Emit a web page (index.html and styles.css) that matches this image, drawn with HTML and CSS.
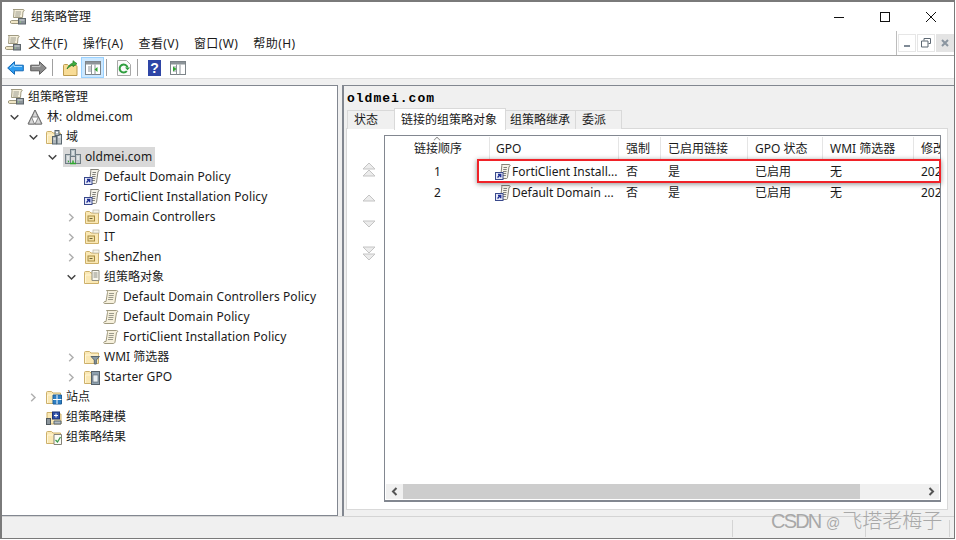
FILE: index.html
```html
<!DOCTYPE html>
<html lang="zh-CN">
<head>
<meta charset="utf-8">
<title>组策略管理</title>
<link rel="stylesheet" href="styles.css">
</head>
<body>
<svg class="defs" width="0" height="0" aria-hidden="true">
  <defs>
    <symbol id="scroll" viewBox="0 0 16 16">
      <path d="M3.500 1.500h10c1 0 1.500 .7 1 1.500l-1 .5-1.500 9.500c-.2 1-1 1.500-2 1.500H1.500c-1 0-1-1.500 0-2H3l1.500-9c.1-.8-.2-1.500-1-2z" fill="#f6f0dc" stroke="#a09a80"/>
      <path d="M6 4.500h5M5.700 6.500h5M5.400 8.500h5M5 10.500h5" stroke="#9a9a8c" fill="none"/>
    </symbol>
    <symbol id="console" viewBox="0 0 16 16">
      <path d="M3 .5h10c1 0 1.500 .7 1 1.500l-1 .5-.5 6H3.500L4 2c0-.8-.2-1.500-1-1.500z" fill="#f6f0dc" stroke="#a09a80"/>
      <path d="M5.500 3h5.500M5.300 5h5.500M5.100 7h5" stroke="#9a9a8c" fill="none"/>
      <path d="M1.500 11.500h8v3h-8c-1.500 0-1.500-3 0-3z" fill="#f0e6c6" stroke="#a09a80"/>
      <rect x="8.500" y="9.500" width="7" height="5.500" fill="#8c9499" stroke="#5d656a"/>
      <path d="M9.500 11h5" stroke="#d5dbde"/>
      <path d="M10 12.500h1v1h-1z" fill="#8fd47f"/>
    </symbol>
    <symbol id="gpo" viewBox="0 0 16 16">
      <path d="M6.500 .5h7.500c1 0 1.500 .7 1 1.500l-1 .5-1.500 11c-.1 .6-.5 1-1 1H5.500L6.800 2c0-.8 .2-1.500-.3-1.500z" fill="#f5f3ea" stroke="#85837a"/>
      <path d="M8.500 3.500h3.500M8.200 5.500h3.500M8 7.500h3.500M7.700 9.500h3.500M7.400 11.500h3.500" stroke="#7f7f7a" fill="none"/>
      <rect x=".5" y="8.500" width="7.500" height="7" fill="#e6e9f7" stroke="#3a4a8c"/>
      <path d="M2.500 13.500l3-3M3 10.500h2.700v2.700" stroke="#1f2f95" fill="none" stroke-width="1.400"/>
    </symbol>
    <symbol id="ou" viewBox="0 0 16 16">
      <path d="M1.500 14.500v-11c0-.6 .4-1 1-1h3l1.500 1.500h7.500v10.500z" fill="#fae8b4" stroke="#cdb06a"/>
      <rect x="9" y="1" width="6" height="3" fill="#f6f3e6" stroke="#b8b5a6" stroke-width=".7"/>
      <rect x="4" y="7" width="6.500" height="5" fill="#f3e0a6" stroke="#a68a3f"/>
      <path d="M5.500 9.500h3" stroke="#6e6230"/>
    </symbol>
    <symbol id="folder" viewBox="0 0 16 16">
      <path d="M.5 14.500V3.500c0-.6 .4-1 1-1h4L7 4h7.500v10.500z" fill="#fae8b4" stroke="#cdb06a"/>
      <path d="M1.500 14V6h13" fill="none" stroke="#fff6d8"/>
    </symbol>
    <symbol id="folder-doc" viewBox="0 0 16 16">
      <use href="#folder"/>
      <path d="M8 1.500h7v10H8z" fill="#f9f7ee" stroke="#8f8d7f"/>
      <path d="M9.500 4h4M9.500 6h4M9.500 8h4" stroke="#8b8b80"/>
    </symbol>
    <symbol id="folder-domain" viewBox="0 0 16 16">
      <use href="#folder"/>
      <rect x="6.500" y="7.500" width="4" height="7.500" fill="#aeb6ba" stroke="#59666e"/>
      <rect x="11" y="5.500" width="4.500" height="9.500" fill="#c2c9cc" stroke="#59666e"/>
      <rect x="9" y="1.500" width="4" height="5" fill="#b8c2c6" stroke="#59666e"/>
      <path d="M7.500 10h2M12 8h2.500M10 3.500h2" stroke="#fff"/>
    </symbol>
    <symbol id="domain" viewBox="0 0 16 16">
      <rect x="5.500" y=".5" width="5" height="7" fill="#b8c2c6" stroke="#6f7c84"/>
      <rect x=".5" y="5.500" width="5" height="9" fill="#c2c9cc" stroke="#6f7c84"/>
      <rect x="10.500" y="5.500" width="5" height="9" fill="#c2c9cc" stroke="#6f7c84"/>
      <path d="M7 3h2M7 5h2M2 8h2M2 10h2M12 8h2M12 10h2" stroke="#fff"/>
      <path d="M3 12.500h1M8 11.500v3M5 14.500h6" stroke="#2fa82f" stroke-width="1.500"/>
    </symbol>
    <symbol id="forest" viewBox="0 0 16 16">
      <path d="M8 1L1 15h14z" fill="#fff" stroke="#6d6d6d"/>
      <path d="M8 1l-3 7h6zM4.500 8L1.500 15h6zM11.500 8l-3.500 7h6.500z" fill="#d6d6d6" stroke="#6d6d6d" stroke-width=".8"/>
    </symbol>
    <symbol id="filter-folder" viewBox="0 0 16 16">
      <use href="#folder"/>
      <path d="M7 7.500h8.500l-3.200 3.500v4h-2v-4z" fill="#8a9aa2" stroke="#59666e"/>
    </symbol>
    <symbol id="starter-folder" viewBox="0 0 16 16">
      <use href="#folder"/>
      <rect x="7.500" y="2.500" width="8" height="13" fill="#8ea0ae" stroke="#56616a"/>
      <rect x="9" y="6" width="5" height="7" fill="#e8eef2" stroke="#56616a" stroke-width=".6"/>
    </symbol>
    <symbol id="sites-folder" viewBox="0 0 16 16">
      <use href="#folder"/>
      <path d="M7 6h8.500v9H7z" fill="#2d7fc4" stroke="#1f5f99"/>
      <path d="M11 6v9M7 10.500h8.500" stroke="#fff"/>
    </symbol>
    <symbol id="modeling" viewBox="0 0 16 16">
      <path d="M1 15V3.500h5L7.500 5H15v10z" fill="#fae8b4" stroke="#cdb06a"/>
      <rect x="6.500" y="3" width="7" height="7" fill="#2d4fa8" stroke="#1d3272"/>
      <path d="M10 4.500v4M8 6.500h4" stroke="#fff"/>
      <rect x=".5" y="9.500" width="4" height="6" fill="#8c959b" stroke="#4f585e"/>
      <path d="M8 12h7v3H8z" fill="#b3bcc2" stroke="#59666e"/>
    </symbol>
    <symbol id="results" viewBox="0 0 16 16">
      <use href="#folder"/>
      <path d="M8 5.500h7.500v10H8z" fill="#fbfbf6" stroke="#85837a"/>
      <path d="M9.500 11l2 2 3-5" fill="none" stroke="#3a9a4c" stroke-width="1.300"/>
    </symbol>
    <symbol id="chev-down" viewBox="0 0 9 6"><path d="M.7 .7L4.500 4.500 8.300 .7" fill="none" stroke="#444" stroke-width="1.500"/></symbol>
    <symbol id="chev-right" viewBox="0 0 6 9"><path d="M.7 .7L4.500 4.500 .7 8.300" fill="none" stroke="#b0b0b0" stroke-width="1.500"/></symbol>
    <symbol id="panel-left" viewBox="0 0 16 14">
      <rect x=".5" y=".5" width="15" height="13" fill="#fff" stroke="#7d8489"/>
      <path d="M1 1h14v2.500H1z" fill="#8d9499"/>
      <path d="M3 6h3M3 8h3M3 10h3M6.500 3.500v10M10 3.500v10" stroke="#8d9499"/>
    </symbol>
    <symbol id="move-top" viewBox="0 0 16 16"><path d="M8 1l6 6H2zM8 8l6 6H2z" fill="#ececec" stroke="#c4c4c4"/></symbol>
    <symbol id="move-up" viewBox="0 0 16 8"><path d="M8 1l6 6H2z" fill="#ececec" stroke="#c4c4c4"/></symbol>
    <symbol id="move-down" viewBox="0 0 16 8"><path d="M8 7l6-6H2z" fill="#ececec" stroke="#c4c4c4"/></symbol>
    <symbol id="move-bottom" viewBox="0 0 16 16"><path d="M8 8L2 2h12zM8 15L2 9h12z" fill="#ececec" stroke="#c4c4c4"/></symbol>
  </defs>
</svg>

<div class="window">
  <header class="titlebar">
    <svg class="ico16 title-ico"><use href="#console"/></svg>
    <span class="title-text">组策略管理</span>
    <div class="caption">
      <svg class="cap-btn" viewBox="0 0 46 16"><path d="M18 8.500h10" stroke="#111" fill="none"/></svg>
      <svg class="cap-btn" viewBox="0 0 46 16"><rect x="18.500" y="3.500" width="9" height="9" stroke="#111" fill="none"/></svg>
      <svg class="cap-btn" viewBox="0 0 46 16"><path d="M18 3l10 10M28 3L18 13" stroke="#111" fill="none"/></svg>
    </div>
  </header>

  <nav class="menubar">
    <svg class="ico16 menu-ico"><use href="#console"/></svg>
    <div class="menu-items">
      <span class="menu-item">文件(F)</span>
      <span class="menu-item">操作(A)</span>
      <span class="menu-item">查看(V)</span>
      <span class="menu-item">窗口(W)</span>
      <span class="menu-item">帮助(H)</span>
    </div>
    <div class="mdi">
      <span class="mdi-btn"><svg width="10" height="10" viewBox="0 0 10 10"><path d="M2 8h6" stroke="#7f8a96" stroke-width="2"/></svg></span>
      <span class="mdi-btn"><svg width="10" height="10" viewBox="0 0 10 10"><path d="M3 2.500V.5h6.500v5H7.500M.5 3h6.500v6H.500z" fill="none" stroke="#5d6873"/></svg></span>
      <span class="mdi-btn mdi-close"><svg width="10" height="10" viewBox="0 0 10 10"><path d="M2 2l6 6M8 2l-6 6" stroke="#8a95a0" stroke-width="2"/></svg></span>
    </div>
  </nav>

  <div class="toolbar">
    <span class="tool tool-arrow"><svg width="17" height="14" viewBox="0 0 17 14"><path d="M.7 7L7.500 .7v3.500h8.800v5.600H7.500v3.500z" fill="#2e9cf0" stroke="#1469b5"/><path d="M3 7l4-3.500v2h8" fill="none" stroke="#a6dbff"/></svg></span>
    <span class="tool tool-arrow"><svg width="17" height="14" viewBox="0 0 17 14"><path d="M16.300 7L9.500 .7v3.500H.7v5.600h8.800v3.500z" fill="#8c8c8c" stroke="#5c5c5c"/><path d="M2 5.500h8v-2" fill="none" stroke="#c4c4c4"/></svg></span>
    <span class="tool-sep"></span>
    <span class="tool tool-icon"><svg width="16" height="16" viewBox="0 0 16 16"><path d="M1.500 15.500v-10c0-.6 .4-1 1-1h3l1 1h7.500c.6 0 1 .4 1 1v9z" fill="#f8dc96" stroke="#bd9c4f"/><path d="M5 9c1-3 3-5 6-6V.7l4 3-4 3V5c-2 .5-4 2-6 4z" fill="#3eae3e" stroke="#1f7a25" stroke-width=".7"/></svg></span>
    <span class="tool tool-active"><svg width="16" height="14"><use href="#panel-left"/><path d="M12.500 6v5L9.500 8.500z" fill="#2fa82f"/></svg></span>
    <span class="tool-sep"></span>
    <span class="tool tool-icon"><svg width="14" height="16" viewBox="0 0 14 16"><path d="M.5 .5h9l4 4v11H.5z" fill="#fbfbfb" stroke="#a8a8a8"/><path d="M10.500 7.500A4 4 0 1 0 9.800 11" fill="none" stroke="#2f9e3f" stroke-width="2"/><path d="M8 7.500h5l-2.500 2.800z" fill="#2f9e3f"/></svg></span>
    <span class="tool-sep"></span>
    <span class="tool tool-help"><span class="help-box">?</span></span>
    <span class="tool tool-icon"><svg width="16" height="14"><use href="#panel-left"/><path d="M3 5.500v5l3.500-2.500z" fill="#2fa82f"/></svg></span>
  </div>

  <div class="gutter"></div>

  <main class="panes">
    <aside class="tree">
      <div class="node d0"><svg class="ico16"><use href="#console"/></svg><span>组策略管理</span></div>
      <div class="node d1"><svg class="twist"><use href="#chev-down"/></svg><svg class="ico16"><use href="#forest"/></svg><span class="en">林: oldmei.com</span></div>
      <div class="node d2"><svg class="twist"><use href="#chev-down"/></svg><svg class="ico16"><use href="#folder-domain"/></svg><span>域</span></div>
      <div class="node d3"><svg class="twist"><use href="#chev-down"/></svg><span class="selected"><svg class="ico16"><use href="#domain"/></svg><span class="en">oldmei.com</span></span></div>
      <div class="node d4"><span class="twist-blank"></span><svg class="ico16"><use href="#gpo"/></svg><span class="en">Default Domain Policy</span></div>
      <div class="node d4"><span class="twist-blank"></span><svg class="ico16"><use href="#gpo"/></svg><span class="en">FortiClient Installation Policy</span></div>
      <div class="node d4"><svg class="twist"><use href="#chev-right"/></svg><svg class="ico16"><use href="#ou"/></svg><span class="en">Domain Controllers</span></div>
      <div class="node d4"><svg class="twist"><use href="#chev-right"/></svg><svg class="ico16"><use href="#ou"/></svg><span class="en">IT</span></div>
      <div class="node d4"><svg class="twist"><use href="#chev-right"/></svg><svg class="ico16"><use href="#ou"/></svg><span class="en">ShenZhen</span></div>
      <div class="node d4"><svg class="twist"><use href="#chev-down"/></svg><svg class="ico16"><use href="#folder-doc"/></svg><span>组策略对象</span></div>
      <div class="node d5"><span class="twist-blank"></span><svg class="ico16"><use href="#scroll"/></svg><span class="en">Default Domain Controllers Policy</span></div>
      <div class="node d5"><span class="twist-blank"></span><svg class="ico16"><use href="#scroll"/></svg><span class="en">Default Domain Policy</span></div>
      <div class="node d5"><span class="twist-blank"></span><svg class="ico16"><use href="#scroll"/></svg><span class="en">FortiClient Installation Policy</span></div>
      <div class="node d4"><svg class="twist"><use href="#chev-right"/></svg><svg class="ico16"><use href="#filter-folder"/></svg><span>WMI 筛选器</span></div>
      <div class="node d4"><svg class="twist"><use href="#chev-right"/></svg><svg class="ico16"><use href="#starter-folder"/></svg><span class="en">Starter GPO</span></div>
      <div class="node d2"><svg class="twist"><use href="#chev-right"/></svg><svg class="ico16"><use href="#sites-folder"/></svg><span>站点</span></div>
      <div class="node d2"><span class="twist-blank"></span><svg class="ico16"><use href="#modeling"/></svg><span>组策略建模</span></div>
      <div class="node d2"><span class="twist-blank"></span><svg class="ico16"><use href="#results"/></svg><span>组策略结果</span></div>
    </aside>

    <section class="detail">
      <h1 class="detail-title">oldmei.com</h1>
      <div class="tabs">
        <span class="tab tab-status">状态</span>
        <span class="tab tab-active">链接的组策略对象</span>
        <span class="tab tab-inherit">组策略继承</span>
        <span class="tab tab-deleg">委派</span>
      </div>
      <div class="tab-panel">
        <div class="move-col">
          <svg class="mv mv-top"><use href="#move-top"/></svg>
          <svg class="mv mv-up"><use href="#move-up"/></svg>
          <svg class="mv mv-down"><use href="#move-down"/></svg>
          <svg class="mv mv-bottom"><use href="#move-bottom"/></svg>
        </div>
        <div class="list">
          <div class="list-row list-head">
            <span class="cell cell-order cell-order-head head-cell">链接顺序<i class="sort-mark"></i></span>
            <span class="cell cell-gpo head-cell">GPO</span>
            <span class="cell head-cell">强制</span>
            <span class="cell head-cell">已启用链接</span>
            <span class="cell head-cell">GPO 状态</span>
            <span class="cell head-cell">WMI 筛选器</span>
            <span class="cell head-cell">修改日期</span>
          </div>
          <div class="list-row">
            <span class="cell cell-order">1</span>
            <span class="cell cell-gpo"><svg class="ico16 cell-ico"><use href="#gpo"/></svg>FortiClient Install...</span>
            <span class="cell">否</span><span class="cell">是</span><span class="cell">已启用</span><span class="cell">无</span><span class="cell">2021/8/12</span>
          </div>
          <div class="list-row">
            <span class="cell cell-order">2</span>
            <span class="cell cell-gpo"><svg class="ico16 cell-ico"><use href="#gpo"/></svg>Default Domain ...</span>
            <span class="cell">否</span><span class="cell">是</span><span class="cell">已启用</span><span class="cell">无</span><span class="cell">2021/8/12</span>
          </div>
          <div class="list-fill"></div>
          <div class="hscroll">
            <span class="sb-btn"><svg width="8" height="9" viewBox="0 0 8 9"><path d="M5.500 1L2 4.500 5.500 8" fill="none" stroke="#555" stroke-width="2"/></svg></span>
            <div class="sb-track"><div class="sb-thumb"></div></div>
            <span class="sb-btn"><svg width="8" height="9" viewBox="0 0 8 9"><path d="M2.500 1L6 4.500 2.500 8" fill="none" stroke="#555" stroke-width="2"/></svg></span>
          </div>
        </div>
      </div>
      <div class="highlight"></div>
    </section>
  </main>

  <footer class="statusbar">
    <span class="st st-main"></span>
    <span class="st st-a"></span>
    <span class="st st-b"></span>
    <span class="st st-c"></span>
  </footer>
  <div class="watermark"><span class="wm-lat">CSDN</span> <span class="wm-at">@</span>飞塔老梅子</div>
</div>
</body>
</html>
```

FILE: styles.css
```css
* { box-sizing: border-box; }
html, body { margin: 0; padding: 0; background: #fff; }
body { width: 956px; height: 540px; overflow: hidden; font: 12px/16px "Noto Sans", "Noto Sans CJK SC", sans-serif; color: #1a1a1a; }
.defs { position: absolute; }

.window {
  position: relative;
  width: 955px;
  height: 539px;
  display: flex;
  flex-direction: column;
  background: #fff;
  border: 1px solid #7a7a7a;
  border-width: 2px 1px 1px 2px;
}
.ico16 { width: 16px; height: 16px; flex: none; display: block; }

.titlebar { height: 29px; display: flex; align-items: center; flex: none; padding-left: 8px; }
.title-text { margin-left: 5px; }
.caption { margin-left: auto; display: flex; }
.cap-btn { width: 46px; height: 16px; display: block; margin-left: 0; }

.menubar { height: 25px; flex: none; display: flex; align-items: center; padding-left: 3px; border-bottom: 1px solid #a9a9a9; position: relative; }
.menu-items { display: flex; margin-left: -.25px; padding-top: 1px; letter-spacing: .4px; }
.menu-items .menu-item { padding: 0 7.5px; }
.mdi { margin-left: auto; height: 24px; padding: 3px 0 0 1px; display: flex; gap: 1px; background: #fff; border-left: 1px solid #bdbdbd; }
.mdi-btn { width: 18px; height: 18px; border: 1px solid #e6e6e6; display: flex; align-items: center; justify-content: center; }
.mdi-close { background: #e4e4e4; border-color: #e4e4e4; }

.toolbar { height: 23px; flex: none; display: flex; align-items: center; padding: 1px 0 0 2px; border-bottom: 1px solid #e0e0e0; }
.tool { display: flex; align-items: center; justify-content: center; height: 21px; }
.tool-arrow { width: 23px; }
.tool-sep { width: 1px; height: 17px; background: #a0a0a0; margin: 0 5px 0 2px; }
.tool-icon { width: 23px; }
.tool-active { width: 23px; background: #cce8ff; border: 1px solid #99d1ff; }
.tool-help { width: 23px; }
.help-box { width: 13px; height: 16px; background: #2e45a6; color: #fff; font: bold 14px/16px "Liberation Sans", sans-serif; text-align: center; display: block; }

.gutter { height: 6px; flex: none; background: #f0f0f0; }

.panes { flex: 1; display: flex; background: #f0f0f0; min-height: 0; position: relative; }
.tree { width: 336px; flex: none; background: #fff; border: 1px solid #828790; border-left: 0; padding-top: 1px; }
.node { height: 20px; display: flex; align-items: center; white-space: nowrap; }
.en { letter-spacing: .1px; }
.node > .ico16, .selected > .ico16 { margin-right: 4px; }
.d0 { padding-left: 6px; }
.d1 { padding-left: 6px; }
.d2 { padding-left: 25px; }
.d3 { padding-left: 44px; }
.d4 { padding-left: 63px; }
.d5 { padding-left: 82px; }
.twist { width: 19px; height: 9px; flex: none; padding: 0 8px 0 2px; overflow: visible; }
.twist-blank { width: 19px; flex: none; }
.selected { display: flex; align-items: center; height: 20px; background: #d9d9d9; margin-left: -2px; padding: 0 3px 0 2px; }

.detail { flex: 1; min-width: 0; margin-left: 4px; border: 1px solid #828790; border-width: 1px 0 0 2px; position: relative; padding: 0 6px 6px 2px; display: flex; flex-direction: column; }
.detail-title { height: 22px; margin: 0; padding: 5px 0 0 1px; font: bold 13px/16px "Liberation Mono", monospace; letter-spacing: 1px; color: #000; }
.tabs { height: 21px; display: flex; align-items: flex-end; padding-left: 1px; flex: none; margin-bottom: -1px; position: relative; z-index: 1; }
.tab { height: 19px; display: flex; align-items: center; padding-left: 6px; background: #f0f0f0; border: 1px solid #d9d9d9; border-bottom: 0; margin-right: -1px; }
.tab-status { width: 48px; }
.tab-active { width: 112px; height: 22px; background: #fff; padding-left: 6px; position: relative; z-index: 2; margin-bottom: -1px; }
.tab-inherit { width: 71px; padding-left: 4px; }
.tab-deleg { width: 47px; padding-left: 6px; }

.tab-panel { flex: 1; min-height: 0; background: #fff; border: 1px solid #d9d9d9; display: flex; padding: 6px 6px 7px 0; }
.move-col { width: 37px; flex: none; display: flex; flex-direction: column; align-items: center; }
.mv { width: 16px; display: block; }
.mv-top { height: 16px; margin: 27px 0 0 6px; }
.mv-up { height: 8px; margin: 16px 0 0 6px; }
.mv-down { height: 8px; margin: 18px 0 0 6px; }
.mv-bottom { height: 16px; margin: 17px 0 0 6px; }

.list { flex: 1; min-width: 0; border: 1px solid #828790; border-bottom-width: 2px; display: flex; flex-direction: column; overflow: hidden; }
.list-row { display: grid; grid-template-columns: 105px 129px 42px 87px 75px 91px 30px; height: 21px; flex: none; align-items: center; }
.list-head { height: 25px; }
.cell { padding-left: 7px; white-space: nowrap; display: flex; align-items: center; overflow: hidden; height: 100%; }
.cell-gpo { padding-left: 6px; }
.head-cell { border-right: 1px solid #e5e5e5; height: 23px; }
.head-cell:last-child { border-right: 0; }
.cell-order { justify-content: center; padding: 0; position: relative; }
.cell-order-head { padding-left: 2px; }
.sort-mark { position: absolute; left: 49px; top: 0; width: 6px; height: 6px; border: solid #8a8a8a; border-width: 1px 0 0 1px; transform: rotate(45deg) scale(.8); }
.cell-ico { margin: 0 1px 0 -1px; }
.list-fill { flex: 1; }
.hscroll { height: 15px; flex: none; display: flex; margin: 0 1px 1px; background: #f0f0f0; }
.sb-btn { width: 17px; flex: none; display: flex; align-items: center; justify-content: center; }
.sb-track { flex: 1; }
.sb-thumb { width: 88%; height: 100%; background: #cdcdcd; }

.highlight { position: absolute; left: 133px; top: 73px; width: 464px; height: 24px; border: 2px solid #f02228; box-shadow: 0 1px 5px rgba(0,0,0,.45); pointer-events: none; }

.statusbar { height: 22px; flex: none; display: flex; background: #f0f0f0; border-top: 1px solid #d4d4d4; }
.st { display: block; border-right: 1px solid #d4d4d4; margin: 3px 0 1px; }
.st-main { width: 731px; }
.st-a { width: 133px; }
.st-b { width: 84px; }
.st-c { flex: 1; border-right: 0; }

.watermark { position: absolute; left: 769px; top: 507px; font: 300 20px/24px "Liberation Sans", "Noto Sans CJK SC", sans-serif; color: #a8a8a8; white-space: nowrap; }
.wm-lat { letter-spacing: -1.8px; }
.wm-at { font-size: 14px; margin-right: 2px; }
```
